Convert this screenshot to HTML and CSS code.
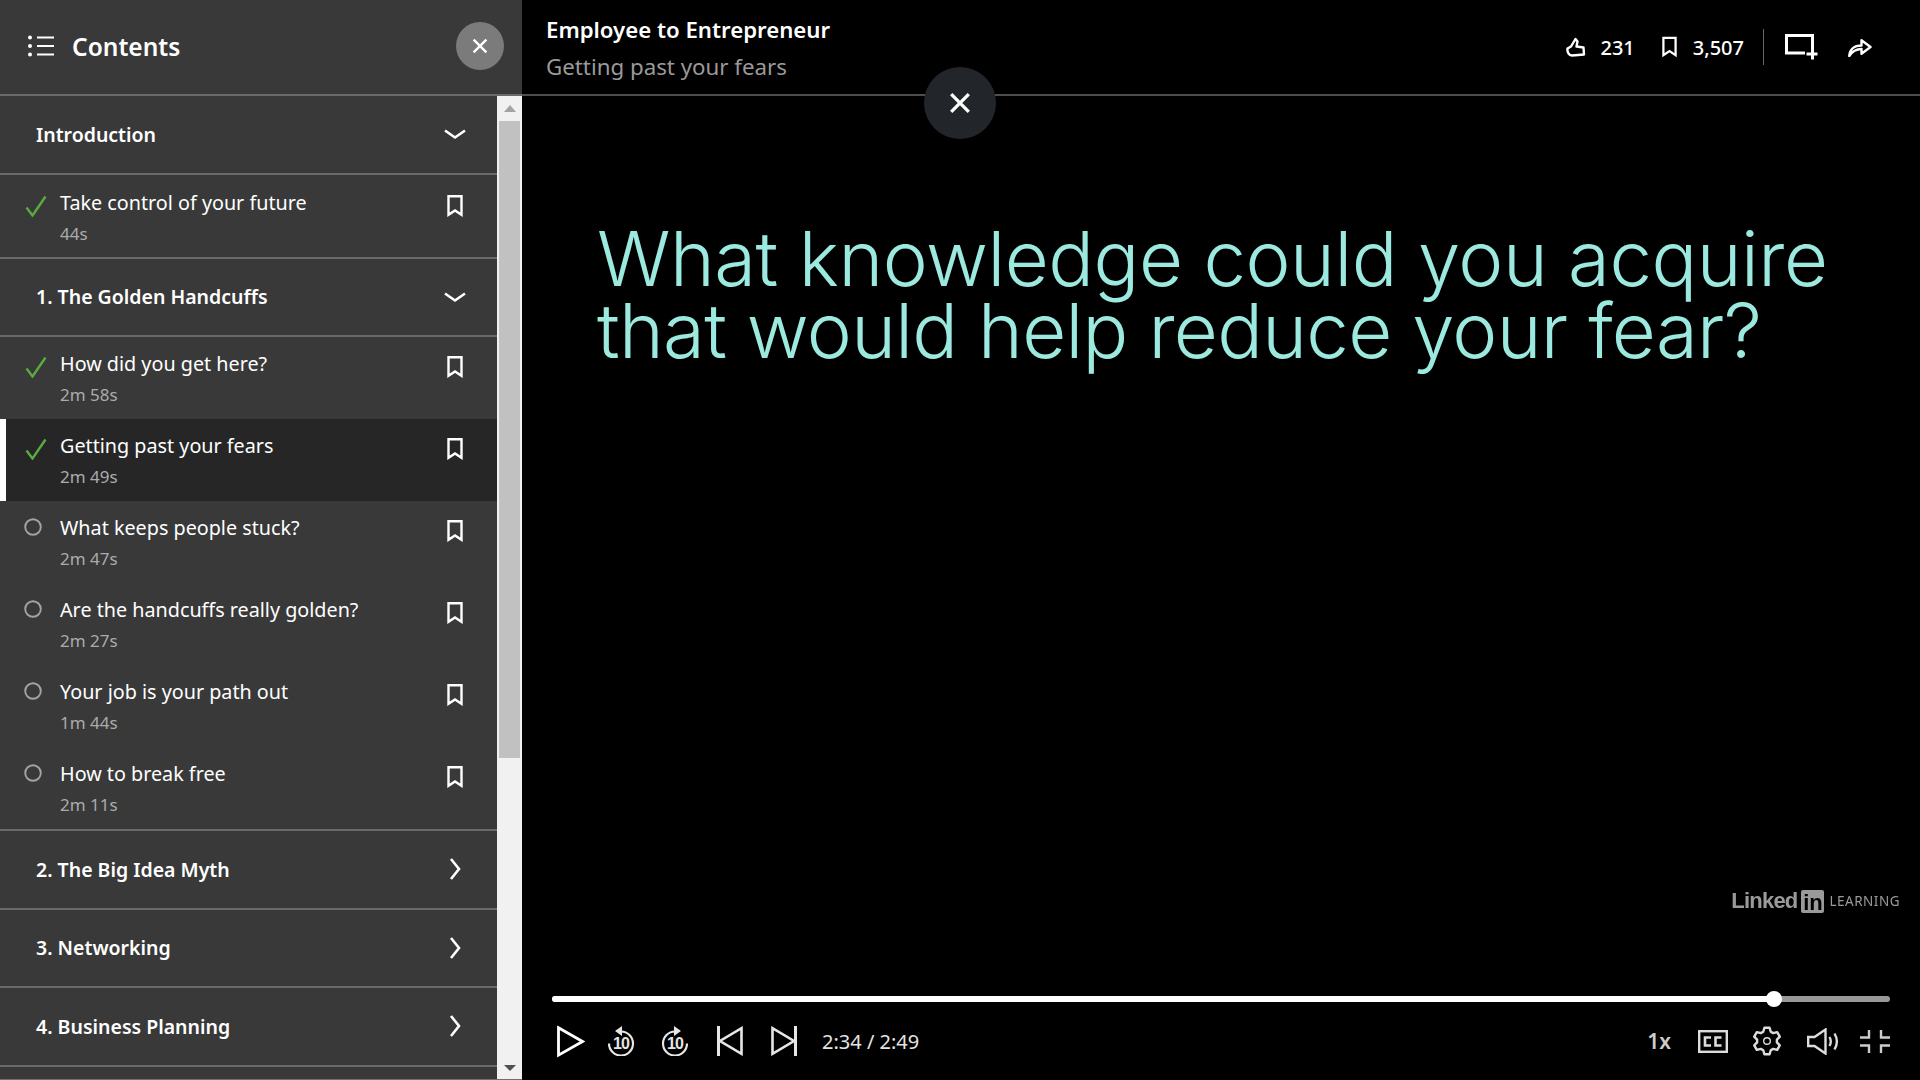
FILE: index.html
```html
<!DOCTYPE html>
<html lang="en">
<head>
    <meta charset="UTF-8">
    <meta name="viewport" content="width=device-width, initial-scale=1.0">
    <title>Employee to Entrepreneur - Getting past your fears</title>
    <link rel="stylesheet" href="styles.css">
</head>
<body>
    <svg class="sprites" width="0" height="0">
        <symbol id="i-bookmark" viewBox="0 0 16 22">
            <path d="M1.5 1.2h13v18.6L8 15.4l-6.5 4.4z" fill="none" stroke="currentColor" stroke-width="2.4"/>
        </symbol>
        <symbol id="i-check" viewBox="0 0 22 22">
            <path d="M1.5 12.5l6 8L20.5 1.5" fill="none" stroke="currentColor" stroke-width="2.4"/>
        </symbol>
        <symbol id="i-circle" viewBox="0 0 18 18">
            <circle cx="9" cy="9" r="7.8" fill="none" stroke="currentColor" stroke-width="1.9"/>
        </symbol>
        <symbol id="i-down" viewBox="0 0 22 12">
            <path d="M1 2.500l10 7 10-7" fill="none" stroke="currentColor" stroke-width="2.600"/>
        </symbol>
        <symbol id="i-right" viewBox="0 0 12 22">
            <path d="M2 1l8 10-8 10" fill="none" stroke="currentColor" stroke-width="2.600"/>
        </symbol>
        <symbol id="i-close" viewBox="0 0 20 20">
            <path d="M2 2l16 16M18 2L2 18" fill="none" stroke="currentColor" stroke-width="3"/>
        </symbol>
    </svg>

    <div class="app">
        <aside class="sidebar">
            <div class="side-head">
                <svg class="list-icon" viewBox="0 0 26 22">
                    <circle cx="2" cy="2.5" r="2" fill="#fff"/>
                    <circle cx="2" cy="11" r="2" fill="#fff"/>
                    <circle cx="2" cy="19.5" r="2" fill="#fff"/>
                    <path d="M9 2.5h17M9 11h17M9 19.5h17" stroke="#fff" stroke-width="2"/>
                </svg>
                <span class="side-title">Contents</span>
                <button class="side-close"><svg class="close-sm"><use href="#i-close"/></svg></button>
            </div>
            <div class="side-body">
                <div class="toc">
                    <div class="section">
                        <span>Introduction</span>
                        <svg class="chev-down"><use href="#i-down"/></svg>
                    </div>
                    <div class="item solo">
                        <svg class="status done"><use href="#i-check"/></svg>
                        <div class="item-text"><div class="item-name">Take control of your future</div><div class="item-time">44s</div></div>
                        <svg class="mark"><use href="#i-bookmark"/></svg>
                    </div>
                    <div class="section">
                        <span>1. The Golden Handcuffs</span>
                        <svg class="chev-down"><use href="#i-down"/></svg>
                    </div>
                    <div class="item">
                        <svg class="status done"><use href="#i-check"/></svg>
                        <div class="item-text"><div class="item-name">How did you get here?</div><div class="item-time">2m 58s</div></div>
                        <svg class="mark"><use href="#i-bookmark"/></svg>
                    </div>
                    <div class="item active">
                        <svg class="status done"><use href="#i-check"/></svg>
                        <div class="item-text"><div class="item-name">Getting past your fears</div><div class="item-time">2m 49s</div></div>
                        <svg class="mark"><use href="#i-bookmark"/></svg>
                    </div>
                    <div class="item">
                        <svg class="status todo"><use href="#i-circle"/></svg>
                        <div class="item-text"><div class="item-name">What keeps people stuck?</div><div class="item-time">2m 47s</div></div>
                        <svg class="mark"><use href="#i-bookmark"/></svg>
                    </div>
                    <div class="item">
                        <svg class="status todo"><use href="#i-circle"/></svg>
                        <div class="item-text"><div class="item-name">Are the handcuffs really golden?</div><div class="item-time">2m 27s</div></div>
                        <svg class="mark"><use href="#i-bookmark"/></svg>
                    </div>
                    <div class="item">
                        <svg class="status todo"><use href="#i-circle"/></svg>
                        <div class="item-text"><div class="item-name">Your job is your path out</div><div class="item-time">1m 44s</div></div>
                        <svg class="mark"><use href="#i-bookmark"/></svg>
                    </div>
                    <div class="item last">
                        <svg class="status todo"><use href="#i-circle"/></svg>
                        <div class="item-text"><div class="item-name">How to break free</div><div class="item-time">2m 11s</div></div>
                        <svg class="mark"><use href="#i-bookmark"/></svg>
                    </div>
                    <div class="section">
                        <span>2. The Big Idea Myth</span>
                        <svg class="chev-right"><use href="#i-right"/></svg>
                    </div>
                    <div class="section">
                        <span>3. Networking</span>
                        <svg class="chev-right"><use href="#i-right"/></svg>
                    </div>
                    <div class="section">
                        <span>4. Business Planning</span>
                        <svg class="chev-right"><use href="#i-right"/></svg>
                    </div>
                </div>
                <div class="scrollbar">
                    <div class="arrow arrow-up"></div>
                    <div class="thumb"></div>
                    <div class="arrow arrow-down"></div>
                </div>
            </div>
        </aside>

        <main class="player">
            <header class="top-bar">
                <div class="titles">
                    <div class="course-title">Employee to Entrepreneur</div>
                    <div class="video-title">Getting past your fears</div>
                </div>
                <div class="top-actions">
                    <svg class="like-icon" viewBox="0 0 20 21">
                        <path d="M1.500 11.500L5 9.500 9.500 2l2 2.500-1 5 7 1 .5 7-12 1c-3 0-5-3.500-4.500-7z" fill="none" stroke="#fff" stroke-width="2.400" stroke-linejoin="round"/>
                    </svg>
                    <span class="count like-count">231</span>
                    <svg class="top-mark"><use href="#i-bookmark"/></svg>
                    <span class="count">3,507</span>
                    <span class="divider"></span>
                    <svg class="add-icon" viewBox="0 0 33 26">
                        <path d="M20 19H1.500V1.500h26V15" fill="none" stroke="#fff" stroke-width="3"/>
                        <path d="M27.500 14.500v11M21.500 20h11" stroke="#fff" stroke-width="3"/>
                    </svg>
                    <svg class="share-icon" viewBox="0 0 24 20">
                        <path d="M1.200 19c.4-6.500 4.800-10.500 12.300-10.500V3.200L22.500 10l-9 6.800V12C8.500 12 4.500 14 1.200 19z" fill="none" stroke="#fff" stroke-width="2.400" stroke-linejoin="round"/>
                    </svg>
                </div>
            </header>

            <section class="video">
                <h1 class="slide-text">
                    <span class="slide-line">What knowledge could you acquire</span>
                    <span class="slide-line tight">that would help reduce your fear?</span>
                </h1>
                <div class="watermark">
                    <span class="wm-linked">Linked</span><span class="wm-in">in</span><span class="wm-learning">LEARNING</span>
                </div>
            </section>

            <div class="scrubber">
                <div class="played" style="width: 91.3%"></div>
                <div class="knob"></div>
            </div>

            <div class="controls">
                <svg class="ctl-play" viewBox="0 0 28 33">
                    <path d="M1.500 2.800L25.500 16.500 1.500 30.200z" fill="none" stroke="#fff" stroke-width="2.800"/>
                </svg>
                <svg class="ctl-skip" viewBox="0 0 28 30">
                    <path d="M14 5.500a12 12 0 1 1-12 12" fill="none" stroke="#e6e6e6" stroke-width="2.200"/>
                    <path d="M15 0v10L8 5z" fill="#e6e6e6"/>
                    <text class="skip-num" x="14" y="22.500">10</text>
                </svg>
                <svg class="ctl-skip fwd" viewBox="0 0 28 30">
                    <path d="M14 5.500a12 12 0 1 0 12 12" fill="none" stroke="#e6e6e6" stroke-width="2.200"/>
                    <path d="M13 0v10l7-5z" fill="#e6e6e6"/>
                    <text class="skip-num" x="14" y="22.500">10</text>
                </svg>
                <svg class="ctl-step" viewBox="0 0 26 30">
                    <path d="M1.500 0v30" stroke="#e6e6e6" stroke-width="3"/>
                    <path d="M24.500 2.200v25.600L3 15z" fill="none" stroke="#e6e6e6" stroke-width="2.600"/>
                </svg>
                <svg class="ctl-step next" viewBox="0 0 26 30">
                    <path d="M24.500 0v30" stroke="#e6e6e6" stroke-width="3"/>
                    <path d="M1.500 2.200v25.600L23 15z" fill="none" stroke="#e6e6e6" stroke-width="2.600"/>
                </svg>
                <span class="time">2:34 / 2:49</span>
                <span class="speed">1x</span>
                <svg class="ctl-cc" viewBox="0 0 30 23">
                    <rect x="1.200" y="1.200" width="27.600" height="20.600" fill="none" stroke="#ddd" stroke-width="2.400"/>
                    <path d="M13 7.500H7v8h6M23.500 7.500h-6v8h6" fill="none" stroke="#ddd" stroke-width="2.600"/>
                </svg>
                <svg class="ctl-gear" viewBox="0 0 30 30">
                    <path d="M11.250 5.730L12.420 1.750H17.580L18.750 5.730L21.160 7.120L25.190 6.140L27.770 10.600L24.900 13.610V16.390L27.770 19.400L25.190 23.860L21.160 22.880L18.750 24.270L17.580 28.250H12.420L11.250 24.270L8.840 22.880L4.810 23.860L2.230 19.400L5.100 16.390V13.610L2.230 10.600L4.810 6.140L8.840 7.120z" fill="none" stroke="#ddd" stroke-width="2.400" stroke-linejoin="round"/>
                    <circle cx="15" cy="15" r="3.300" fill="none" stroke="#ddd" stroke-width="1.400"/>
                </svg>
                <svg class="ctl-volume" viewBox="0 0 33 27">
                    <path d="M1.200 9h6.300l11-7.500v24L7.500 18H1.200z" fill="none" stroke="#ddd" stroke-width="2.400"/>
                    <path d="M22.500 9c1.600 2.800 1.600 6.200 0 9M27.500 5.500c3 5 3 11 0 16" fill="none" stroke="#ddd" stroke-width="2.400"/>
                </svg>
                <svg class="ctl-exit" viewBox="0 0 30 23">
                    <path d="M0 7.500h9V0M30 7.500h-9V0M0 15.500h9V23M30 15.500h-9V23" fill="none" stroke="#ccc" stroke-width="2.400"/>
                </svg>
            </div>

            <button class="overlay-close"><svg class="close-lg"><use href="#i-close"/></svg></button>
        </main>
    </div>
</body>
</html>
```

FILE: styles.css
```css
* {
    box-sizing: border-box;
}
html, body {
    margin: 0;
    height: 100%;
    overflow: hidden;
}
body {
    background: #000;
    color: #fff;
    font-family: "Noto Sans", "Open Sans", sans-serif;
}
.sprites {
    position: absolute;
}
.app {
    display: flex;
    height: 1080px;
}

/* sidebar */
.sidebar {
    width: 522px;
    flex: none;
    display: flex;
    flex-direction: column;
    background: #393939;
    border-bottom: 1px solid #707070;
}
.side-head {
    height: 96px;
    flex: none;
    display: flex;
    align-items: center;
    padding: 0 18px 2px 28px;
    border-bottom: 2px solid #6a6a6a;
}
.list-icon {
    width: 26px;
    height: 22px;
}
.side-title {
    margin-left: 18px;
    font-size: 24.500px;
    font-weight: 600;
    flex: 1;
}
.side-close {
    width: 48px;
    height: 48px;
    border: none;
    border-radius: 50%;
    background: #7b7b7b;
    color: #fff;
    display: flex;
    align-items: center;
    justify-content: center;
    padding: 0;
}
.close-sm {
    width: 16px;
    height: 16px;
}
.side-body {
    flex: 1;
    display: flex;
    min-height: 0;
}
.toc {
    width: 497px;
    flex: none;
    overflow: hidden;
}
.section {
    height: 78.500px;
    display: flex;
    align-items: center;
    justify-content: space-between;
    padding: 0 31px 0 36px;
    border-bottom: 2px solid #6a6a6a;
    font-size: 19.500px;
    font-weight: 600;
}
.chev-down {
    width: 22px;
    height: 12px;
}
.chev-right {
    width: 12px;
    height: 22px;
    margin-right: 5px;
}
.item {
    height: 82px;
    display: flex;
    align-items: flex-start;
    padding: 13px 34px 0 24px;
    position: relative;
}
.item.last {
    height: 84px;
    border-bottom: 2px solid #6a6a6a;
}
.item.solo {
    height: 84px;
    padding-top: 14px;
    border-bottom: 2px solid #6a6a6a;
}
.item.active {
    background: #262626;
}
.item.active::before {
    content: "";
    position: absolute;
    left: 0;
    top: 0;
    bottom: 0;
    width: 6px;
    background: #fff;
}
.status {
    width: 22px;
    height: 22px;
    flex: none;
    margin-top: 6px;
}
.status.done {
    color: #5aab3f;
    margin-left: 1px;
    margin-right: -1px;
}
.status.todo {
    width: 18px;
    height: 18px;
    margin-top: 4px;
    color: #a3a3a3;
    margin-right: 4px;
}
.item-text {
    flex: 1;
    margin-left: 14px;
}
.item-name {
    font-size: 19.750px;
    line-height: 27px;
}
.item-time {
    font-size: 17px;
    line-height: 24px;
    margin-top: 6px;
    color: #ababab;
}
.mark {
    width: 16px;
    height: 22px;
    margin-top: 6px;
    color: #fff;
}

/* fake scrollbar, the page itself doesn't scroll */
.scrollbar {
    flex: 1;
    display: flex;
    flex-direction: column;
    align-items: center;
    background: #f1f1f1;
}
.thumb {
    width: 21px;
    height: 637px;
    background: #c1c1c1;
}
.arrow {
    width: 0;
    height: 0;
    border-left: 6px solid transparent;
    border-right: 6px solid transparent;
}
.arrow-up {
    margin: 9px 0 9px;
    border-bottom: 7px solid #a3a3a3;
}
.arrow-down {
    margin-top: auto;
    margin-bottom: 8px;
    border-top: 6px solid #505050;
}

/* player */
.player {
    flex: 1;
    display: flex;
    flex-direction: column;
    position: relative;
    min-width: 0;
}
.top-bar {
    height: 96px;
    flex: none;
    display: flex;
    align-items: center;
    justify-content: space-between;
    padding: 0 48px 0 24px;
    border-bottom: 2px solid #4e4e4e;
}
.titles {
    padding-top: 2px;
}
.course-title {
    font-size: 22.200px;
    font-weight: 600;
    line-height: 30px;
}
.video-title {
    font-size: 22.300px;
    line-height: 30px;
    margin-top: 7px;
    color: #9a9a9a;
}
.top-actions {
    display: flex;
    align-items: center;
}
.like-icon {
    width: 20px;
    height: 21px;
}
.count {
    font-size: 20px;
    font-weight: 500;
    margin-left: 16px;
}
.like-count {
    margin-left: 14px;
    margin-right: 27px;
}
.top-mark {
    width: 15px;
    height: 22px;
}
.divider {
    width: 1px;
    height: 36px;
    background: #666;
    margin: 0 21px 0 19px;
}
.add-icon {
    width: 33px;
    height: 26px;
}
.share-icon {
    width: 24px;
    height: 20px;
    margin-left: 30px;
}
.video {
    flex: 1;
    position: relative;
    padding: 126px 0 0 75px;
}
.slide-text {
    margin: 0;
    font-family: "Inter", sans-serif;
    font-weight: 300;
    font-size: 76px;
    letter-spacing: -.45px;
    line-height: 72px;
    color: #9ce9df;
}
.slide-line {
    display: block;
    white-space: nowrap;
}
.slide-line.tight {
    letter-spacing: -.67px;
}
.watermark {
    position: absolute;
    right: 20px;
    bottom: 82px;
    display: flex;
    align-items: center;
    color: #9a9a9a;
    filter: blur(.4px);
}
.wm-linked {
    font-size: 22px;
    font-weight: 700;
    letter-spacing: -.8px;
    font-family: "Liberation Sans", sans-serif;
}
.wm-in {
    width: 23px;
    height: 23px;
    background: #9a9a9a;
    color: #000;
    font-family: "Liberation Sans", sans-serif;
    font-size: 22px;
    font-weight: 700;
    line-height: 25px;
    text-align: center;
    border-radius: 2px;
    margin-left: 4px;
}
.wm-learning {
    font-size: 13.500px;
    letter-spacing: .5px;
    margin-left: 5px;
}
.scrubber {
    flex: none;
    height: 6px;
    margin: 0 30px;
    background: #999;
    border-radius: 3px;
    position: relative;
}
.played {
    height: 100%;
    background: #fff;
    border-radius: 3px;
}
.knob {
    position: absolute;
    left: 91.300%;
    top: -5px;
    width: 16px;
    height: 16px;
    margin-left: -8px;
    background: #fff;
    border-radius: 50%;
}
.controls {
    flex: none;
    height: 78px;
    display: flex;
    align-items: center;
    padding: 0 30px 0 35px;
}
.controls svg {
    flex: none;
}
.ctl-play {
    width: 28px;
    height: 33px;
}
.ctl-skip {
    width: 28px;
    height: 30px;
    margin-left: 22px;
}
.ctl-skip.fwd {
    margin-left: 26px;
}
.skip-num {
    font-family: "Liberation Sans", sans-serif;
    font-size: 16px;
    font-weight: 700;
    letter-spacing: -1px;
    fill: #e6e6e6;
    text-anchor: middle;
}
.ctl-step {
    width: 26px;
    height: 30px;
    margin-left: 28px;
}
.ctl-step.next {
    margin-left: 28px;
}
.time {
    margin-left: 25px;
    font-size: 20px;
    color: #e4e4e4;
}
.speed {
    margin-left: auto;
    font-size: 21px;
    font-weight: 600;
    color: #ccc;
}
.ctl-cc {
    width: 30px;
    height: 23px;
    margin-left: 27px;
}
.ctl-gear {
    width: 30px;
    height: 30px;
    margin-left: 24px;
}
.ctl-volume {
    width: 33px;
    height: 27px;
    margin-left: 25px;
}
.ctl-exit {
    width: 30px;
    height: 23px;
    margin-left: 20px;
}
.overlay-close {
    position: absolute;
    left: 402px;
    top: 67px;
    width: 72px;
    height: 72px;
    padding: 0;
    border: none;
    border-radius: 50%;
    background: #22262b;
    color: #fff;
    display: flex;
    align-items: center;
    justify-content: center;
}
.close-lg {
    width: 22px;
    height: 22px;
}
```
